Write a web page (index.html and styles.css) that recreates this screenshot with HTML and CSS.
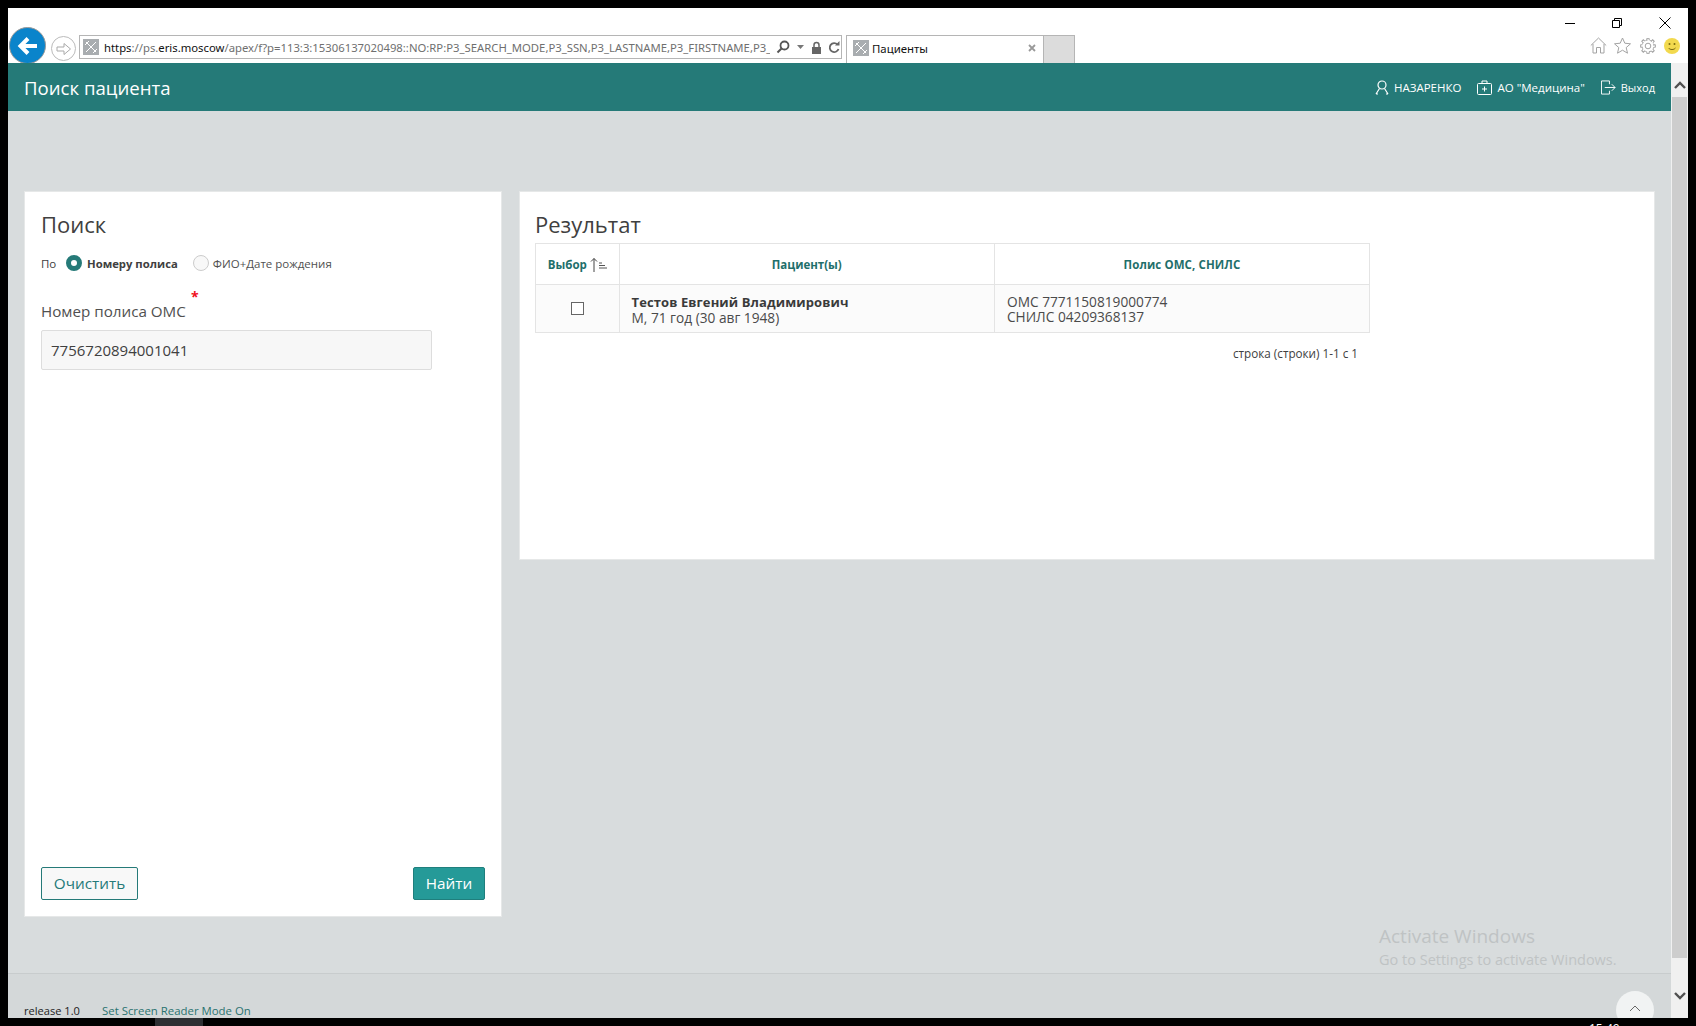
FILE: index.html
```html
<!DOCTYPE html>
<html lang="ru">
<head>
<meta charset="utf-8">
<title>Пациенты</title>
<link rel="stylesheet" href="styles.css">
</head>
<body>
<div class="screen">
  <div class="window">
    <div class="chrome">
      <div class="caption">
        <svg class="cap-icon" width="12" height="12" viewBox="0 0 12 12"><path d="M1 6.500h10" stroke="#000" fill="none"/></svg>
        <svg class="cap-icon" width="12" height="12" viewBox="0 0 12 12"><path d="M1.500 3.500h7v7h-7zM3.500 3.500v-2h7v7h-2" stroke="#000" fill="none"/></svg>
        <svg class="cap-icon" width="14" height="12" viewBox="0 0 14 12"><path d="M1.500 .5l11 11M12.500 .5l-11 11" stroke="#000" fill="none"/></svg>
      </div>
      <div class="toolbar">
        <div class="back">
          <svg width="24" height="24" viewBox="0 0 24 24"><path d="M21 12H5M12 4.500L4.500 12l7.500 7.500" stroke="#fff" stroke-width="4" fill="none"/></svg>
        </div>
        <div class="forward">
          <svg width="16" height="14" viewBox="0 0 16 14"><path d="M1 5h7V1.500L14.500 7 8 12.500V9H1z" stroke="#a9a9a9" fill="none"/></svg>
        </div>
        <div class="address">
          <svg class="favicon" width="16" height="16" viewBox="0 0 16 16"><rect width="16" height="16" fill="#a9adb0"/><path d="M3 3l10 10M13 3L3 13M2 6l4-4M10 14l4-4" stroke="#fff" fill="none"/></svg>
          <span class="url"><span class="url-dark">https</span>://ps.<span class="url-dark">eris.moscow</span>/apex/f?p=113:3:15306137020498::NO:RP:P3_SEARCH_MODE,P3_SSN,P3_LASTNAME,P3_FIRSTNAME,P3_</span>
          <svg class="addr-icon" width="14" height="14" viewBox="0 0 14 14"><circle cx="8.500" cy="5.500" r="4" stroke="#555" stroke-width="1.800" fill="none"/><path d="M5.500 8.500L1.500 12.500" stroke="#555" stroke-width="2"/></svg>
          <svg class="addr-icon" width="9" height="6" viewBox="0 0 9 6"><path d="M1 1h7L4.500 5z" fill="#777"/></svg>
          <svg class="addr-icon" width="11" height="13" viewBox="0 0 11 13"><path d="M3 6V4a2.500 2.500 0 0 1 5 0v2" stroke="#666" stroke-width="1.500" fill="none"/><rect x="1" y="6" width="9" height="7" fill="#666"/></svg>
          <svg class="addr-icon" width="12" height="13" viewBox="0 0 12 13"><path d="M9.500 3.500A4.500 4.500 0 1 0 10.500 8" stroke="#666" stroke-width="1.800" fill="none"/><path d="M7 4.500h4.500V0z" fill="#666"/></svg>
        </div>
        <div class="tab">
          <svg class="favicon" width="16" height="16" viewBox="0 0 16 16"><rect width="16" height="16" fill="#a9adb0"/><path d="M3 3l10 10M13 3L3 13M2 6l4-4M10 14l4-4" stroke="#fff" fill="none"/></svg>
          <span class="tab-title">Пациенты</span>
          <svg width="8" height="8" viewBox="0 0 8 8"><path d="M1 1l6 6M7 1L1 7" stroke="#999" stroke-width="1.800"/></svg>
        </div>
        <div class="new-tab"></div>
        <div class="tools">
          <svg width="17" height="17" viewBox="0 0 17 17"><path d="M.8 8.500L8.500 1l7.700 7.500M3 7v9h3.500v-5.500h4V16H14V7" stroke="#a3a3a3" fill="none"/></svg>
          <svg width="17" height="17" viewBox="0 0 17 17"><path d="M8.500 1l2.300 5.200 5.700.6-4.300 3.800 1.300 5.600-5-3-5 3 1.300-5.600L.5 6.800l5.700-.6z" stroke="#a3a3a3" fill="none"/></svg>
          <svg width="16" height="16" viewBox="0 0 16 16" stroke="#a3a3a3" fill="none">
            <circle cx="8" cy="8" r="2.800"/>
            <circle cx="8" cy="8" r="5.900" stroke-dasharray="2.160 2.470" stroke-dashoffset="-1.236"/>
            <path d="M6.770 2.230L6.900.3h2.200l.13 1.930"/>
            <path d="M6.770 2.230L6.900.3h2.200l.13 1.930" transform="rotate(45 8 8)"/>
            <path d="M6.770 2.230L6.900.3h2.200l.13 1.930" transform="rotate(90 8 8)"/>
            <path d="M6.770 2.230L6.900.3h2.200l.13 1.930" transform="rotate(135 8 8)"/>
            <path d="M6.770 2.230L6.900.3h2.200l.13 1.930" transform="rotate(180 8 8)"/>
            <path d="M6.770 2.230L6.900.3h2.200l.13 1.930" transform="rotate(225 8 8)"/>
            <path d="M6.770 2.230L6.900.3h2.200l.13 1.930" transform="rotate(270 8 8)"/>
            <path d="M6.770 2.230L6.900.3h2.200l.13 1.930" transform="rotate(315 8 8)"/>
          </svg>
          <svg width="16" height="16" viewBox="0 0 16 16"><circle cx="8" cy="8" r="8" fill="#f2d94e"/><circle cx="5.500" cy="6" r="1" fill="#7a6a10"/><circle cx="10.500" cy="6" r="1" fill="#7a6a10"/><path d="M4.500 10c1.500 2 5.500 2 7 0" stroke="#7a6a10" fill="none"/></svg>
        </div>
      </div>
    </div>
    <div class="viewport">
      <div class="page">
        <header class="app-header">
          <div class="app-title">Поиск пациента</div>
          <nav class="app-nav">
            <span class="nav-item">
              <svg width="14" height="15" viewBox="0 0 14 15"><circle cx="7" cy="5" r="4" stroke="#fff" stroke-width="1.200" fill="none"/><path d="M4.500 8.500L1 14M9.500 8.500L13 14M1 14h2M13 14h-2" stroke="#fff" stroke-width="1.200" fill="none"/></svg>
              НАЗАРЕНКО
            </span>
            <span class="nav-item">
              <svg width="15" height="15" viewBox="0 0 15 15"><rect x=".5" y="3.500" width="14" height="11" rx="1" stroke="#fff" fill="none"/><path d="M5 3.500V1h5v2.500M7.500 6.500v5M5 9h5" stroke="#fff" fill="none"/></svg>
              АО "Медицина"
            </span>
            <span class="nav-item nav-exit">
              <svg width="15" height="15" viewBox="0 0 16 15"><path d="M9 4V.5H.5v14H9V11M4 7.500h11M11.500 4l3.500 3.500-3.500 3.500" stroke="#fff" fill="none"/></svg>
              Выход
            </span>
          </nav>
        </header>
        <main class="content">
          <section class="panel panel-search">
            <h2 class="panel-title">Поиск</h2>
            <div class="mode">
              <span class="mode-by">По</span>
              <span class="radio radio-on"></span>
              <span class="mode-on">Номеру полиса</span>
              <span class="radio"></span>
              <span class="mode-off">ФИО+Дате рождения</span>
            </div>
            <div class="field-label">Номер полиса ОМС<span class="required">*</span></div>
            <div class="field-input">7756720894001041</div>
            <div class="actions">
              <button class="btn btn-outline">Очистить</button>
              <button class="btn btn-solid">Найти</button>
            </div>
          </section>
          <section class="panel panel-result">
            <h2 class="panel-title result-title">Результат</h2>
            <table class="grid">
              <thead>
                <tr>
                  <th class="col-a">Выбор <svg class="sort" width="18" height="15" viewBox="0 0 18 15"><path d="M4 15V1.500M1 4.500L4 1.500l3 3" stroke="#444" fill="none"/><path d="M9 6h3M9 8.500h6M9 11h8" stroke="#555"/></svg></th>
                  <th class="col-b">Пациент(ы)</th>
                  <th class="col-c">Полис ОМС, СНИЛС</th>
                </tr>
              </thead>
              <tbody>
                <tr>
                  <td class="cell-check"><span class="checkbox"></span></td>
                  <td><strong class="pname">Тестов Евгений Владимирович</strong><br>М, 71 год (30 авг 1948)</td>
                  <td>ОМС 7771150819000774<br>СНИЛС 04209368137</td>
                </tr>
              </tbody>
            </table>
            <div class="pager">строка (строки) 1-1 с 1</div>
          </section>
        </main>
        <footer class="app-footer">
          <span class="release">release 1.0</span>
          <a class="reader">Set Screen Reader Mode On</a>
        </footer>
        <div class="activate">
          <div class="activate-h">Activate Windows</div>
          <div class="activate-s">Go to Settings to activate Windows.</div>
        </div>
        <div class="to-top"><svg width="12" height="7" viewBox="0 0 12 7"><path d="M1 6l5-5 5 5" stroke="#666" fill="none"/></svg></div>
      </div>
      <div class="scrollbar">
        <svg width="12" height="8" viewBox="0 0 12 8"><path d="M1 7l5-5 5 5" stroke="#505050" stroke-width="2.400" fill="none"/></svg>
        <div class="thumb"></div>
        <svg width="12" height="8" viewBox="0 0 12 8"><path d="M1 1l5 5 5-5" stroke="#505050" stroke-width="2.400" fill="none"/></svg>
      </div>
    </div>
  </div>
  <div class="taskbar">
    <span class="task-app"></span>
    <span class="task-time">15:49</span>
  </div>
</div>
</body>
</html>
```

FILE: styles.css
```css
* { box-sizing: border-box; }
html, body { margin: 0; padding: 0; height: 100%; overflow: hidden; background: #000; }
body { font-family: "Open Sans", "Noto Sans", sans-serif; color: #404040; }
.screen { width: 1696px; height: 1026px; padding: 8px 8px 0; display: flex; flex-direction: column; background: #000; overflow: hidden; }
.window { width: 1680px; height: 1010px; display: flex; flex-direction: column; background: #fff; flex: none; }

.chrome { height: 55px; flex: none; background: #fff; overflow: hidden; }
.caption { height: 27px; display: flex; justify-content: flex-end; align-items: center; gap: 35px; padding: 3px 16px 0 0; }
.toolbar { height: 28px; display: flex; align-items: flex-start; position: relative; }
.back { width: 37px; height: 37px; margin: -8px 0 0 1px; border-radius: 50%; background: #0a84cb; border: 1px solid #9a9a9a; display: flex; align-items: center; justify-content: center; flex: none; }
.forward { width: 25px; height: 25px; margin: 1px 3px 0 5px; border: 1px solid #bbb; border-radius: 50%; display: flex; align-items: center; justify-content: center; flex: none; }
.address { width: 763px; height: 24px; border: 1px solid #b5b5b5; display: flex; align-items: center; padding: 0 4px 0 3px; flex: none; }
.favicon { flex: none; }
.url { font-family: "Noto Sans", "Open Sans", sans-serif; font-size: 11.300px; color: #6f6f6f; margin-left: 5px; white-space: nowrap; overflow: hidden; width: 666px; flex: none; }
.url-dark { color: #111; }
.addr-icon { margin-left: 6px; flex: none; }
.tab { width: 198px; height: 28px; margin-left: 4px; border: 1px solid #b5b5b5; border-bottom: 0; display: flex; align-items: center; padding: 0 7px 4px 6px; flex: none; }
.tab-title { font-family: "Noto Sans", "Open Sans", sans-serif; font-size: 11.400px; color: #111; margin: 2px 0 0 3px; flex: 1; }
.new-tab { width: 31px; height: 28px; background: #dcdcdc; border: 1px solid #b5b5b5; border-left: 0; border-bottom: 0; flex: none; }
.tools { margin-left: auto; padding: 2px 8px 0 0; display: flex; gap: 7px; align-items: center; }
.tools svg:nth-child(3) { margin-left: 2px; }
.tools svg:nth-child(4) { margin-left: 1px; }

.viewport { flex: 1; display: flex; min-height: 0; }
.page { flex: 1; display: flex; flex-direction: column; background: #d8dcdd; position: relative; min-width: 0; overflow: hidden; }
.app-header { height: 48px; flex: none; background: #257a78; color: #fff; display: flex; align-items: center; justify-content: space-between; padding: 0 16px; }
.app-title { font-size: 18.600px; }
.app-nav { display: flex; align-items: center; gap: 16px; font-size: 11.500px; }
.nav-item { display: flex; align-items: center; gap: 5px; }
.nav-exit { gap: 5px; font-size: 11px; }

.content { flex: 1; display: flex; align-items: flex-start; gap: 17px; padding: 80px 16px 0 16px; min-height: 0; }
.panel { background: #fff; border: 1px solid #e6e8e8; }
.panel-search { width: 478px; height: 726px; flex: none; display: flex; flex-direction: column; padding: 15px 16px 16px; }
.panel-result { flex: 1; height: 369px; padding: 15px 15px; }
.panel-title { margin: 0; font-weight: 400; font-size: 22px; line-height: 34px; color: #404040; }
.result-title { height: 36px; }
.mode { display: flex; align-items: center; font-size: 11.500px; height: 20px; margin-top: 12px; white-space: nowrap; }
.mode-by { width: 25px; }
.radio { width: 16px; height: 16px; border-radius: 50%; border: 1px solid #ccc; background: #f8f8f8; flex: none; }
.radio-on { border: 5px solid #257a78; background: #fff; }
.mode-on { font-weight: 700; font-size: 11.300px; margin-left: 5px; margin-right: 15px; }
.mode-off { margin-left: 4px; color: #505050; }
.field-label { font-size: 15.200px; color: #505050; margin-top: 27px; line-height: 22px; position: relative; }
.required { position: absolute; left: 150px; top: -12px; color: #f01020; font-size: 14px; font-weight: 700; line-height: 18px; }
.field-input { width: 391px; height: 40px; margin-top: 8px; background: #f7f7f7; border: 1px solid #ddd; border-radius: 2px; padding: 0 9px; font-size: 15px; line-height: 38px; color: #404040; }
.actions { margin-top: auto; display: flex; justify-content: space-between; }
.btn { height: 33px; font-family: inherit; font-size: 15.300px; line-height: 1; border-radius: 2px; padding: 0; cursor: pointer; }
.btn-outline { width: 97px; background: #f8f8f8; color: #257a78; border: 1px solid #257a78; }
.btn-solid { width: 72px; background: #259a98; color: #fff; border: 1px solid #1f7f7d; }

.grid { border-collapse: collapse; width: 835px; table-layout: fixed; font-size: 13.700px; }
.grid th, .grid td { border: 1px solid #e4e4e4; }
.grid th { height: 41px; color: #1f6f6b; font-size: 11.500px; font-weight: 700; text-align: center; padding: 0; white-space: nowrap; }
.grid .col-a { width: 83.500px; padding-left: 1px; }
.col-b { width: 375.500px; }
.grid .col-c { letter-spacing: .1px; }
.grid td { height: 48px; background: #fbfbfb; padding: 1px 12px 0; line-height: 15px; color: #4a4a4a; }
.sort { vertical-align: -3px; }
.grid .cell-check { text-align: center; padding: 0 0 2px; }
.checkbox { display: inline-block; width: 13px; height: 13px; border: 1px solid #666; background: #fff; vertical-align: middle; }
.pname { color: #3a3a3a; font-size: 13px; letter-spacing: .1px; }
.pager { width: 835px; text-align: right; font-size: 11.700px; padding: 12px 12px 0 0; line-height: 16px; }

.app-footer { height: 45px; flex: none; background: #d4d8d9; border-top: 1px solid #c8cccd; display: flex; align-items: flex-end; font-size: 11.400px; padding: 0 16px; line-height: 15px; overflow: hidden; }
.release { color: #222; width: 78px; font-size: 11.100px; }
.reader { color: #2a7370; }
.activate { position: absolute; left: 1371px; top: 860px; color: #bfc3c4; pointer-events: none; }
.activate-h { font-size: 19px; line-height: 27px; }
.activate-s { font-size: 14.500px; line-height: 19px; }
.to-top { position: absolute; left: 1608px; top: 928px; width: 38px; height: 38px; border-radius: 50%; background: #f1f3f3; display: flex; justify-content: center; padding-top: 14px; }
.to-top svg { display: block; }

.scrollbar { width: 17px; flex: none; background: #f0f0f0; display: flex; flex-direction: column; align-items: center; padding: 18px 0 16px; }
.thumb { width: 15px; height: 861px; background: #cdcdcd; margin: 8px 0 34px; flex: none; }

.taskbar { flex: 1; position: relative; min-height: 8px; background: #000; }
.task-app { position: absolute; left: 147px; top: 0; width: 48px; height: 8px; background: #2d2f33; }
.task-time { position: absolute; left: 1581px; top: 3px; font-size: 12px; line-height: 15px; color: #fff; }
```
